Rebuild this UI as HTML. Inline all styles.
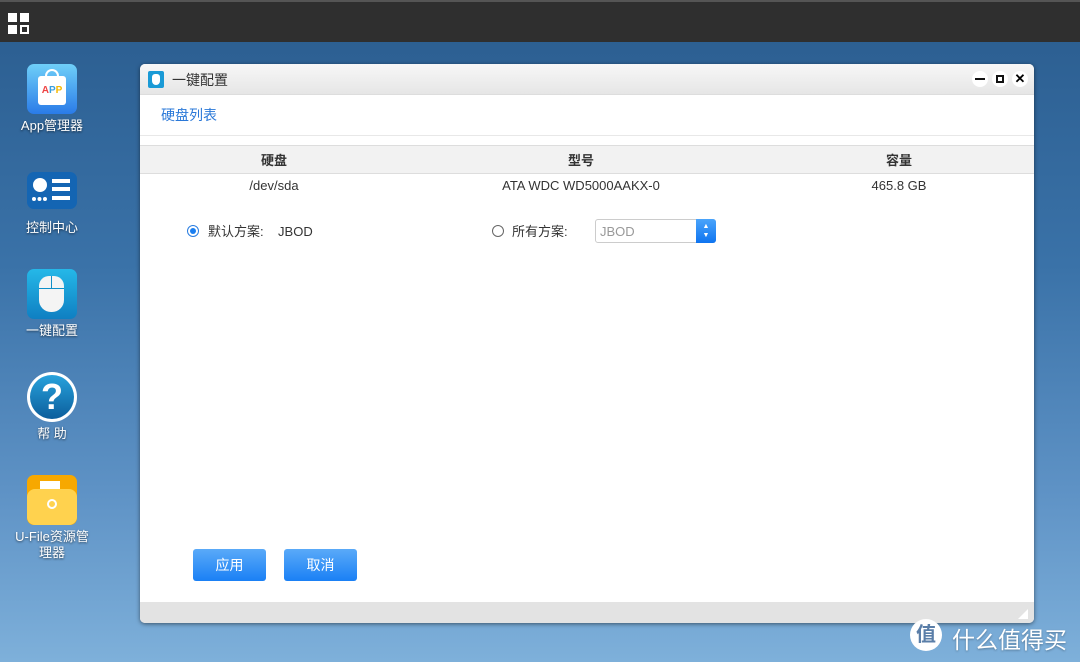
<!DOCTYPE html>
<html><head><meta charset="utf-8"><style>
*{margin:0;padding:0;box-sizing:border-box}
body{width:1080px;height:662px;overflow:hidden;position:relative;font-family:"Liberation Sans","Noto Sans CJK SC",sans-serif;background:linear-gradient(180deg,#2a5c8e 0%,#3a72a8 40%,#5f93c6 75%,#7eb0da 100%)}
.top{position:absolute;left:0;top:0;width:1080px;height:42px;background:#2f2f2f;border-top:2px solid #555}
.grid{position:absolute;left:8px;top:11px}
.grid i{position:absolute;width:9px;height:9px;background:#fff}
.ic{position:absolute;left:27px;width:50px;height:50px;border-radius:7px}
.lb{position:absolute;left:0;width:104px;text-align:center;color:#fff;font-size:13px;text-shadow:0 1px 2px rgba(0,0,0,.6);line-height:16px}
.win{position:absolute;left:140px;top:64px;width:894px;height:559px;background:#fff;border-radius:5px;box-shadow:0 1px 4px rgba(0,0,0,.5);overflow:hidden}
.tb{height:31px;background:linear-gradient(#f7f7f7,#e6e6e6);border-bottom:1px solid #ddd;position:relative}
.tb .t{position:absolute;left:32px;top:6px;font-size:14px;color:#333}
.th{position:absolute;top:81px;left:0;width:894px;height:29px;background:#f2f2f2;border-top:1px solid #ddd;border-bottom:1px solid #ddd;font-size:13px;font-weight:bold;color:#333}
.c{position:absolute;text-align:center;width:300px}
.btn{position:absolute;top:485px;width:73px;height:32px;border-radius:3px;background:linear-gradient(#5aaaf8,#1a80f5);color:#fff;font-size:14px;text-align:center;line-height:32px}
.foot{position:absolute;left:0;top:538px;width:894px;height:21px;background:#e3e3e3}
</style></head><body>
<div class="top"><div class="grid"><i style="left:0;top:0"></i><i style="left:12px;top:0"></i><i style="left:0;top:12px"></i><i style="left:12px;top:12px;background:none;border:2px solid #fff"></i></div></div>

<div class="ic" style="top:64px;background:linear-gradient(#6fcff8,#2a7be8)"><div style="position:absolute;left:11px;top:12px;width:28px;height:29px;background:#fff;border-radius:3px;font-size:10px;font-weight:bold;text-align:center;line-height:30px;color:#e44">A<span style="color:#3aa0e0">P</span><span style="color:#f5b800">P</span></div><div style="position:absolute;left:18px;top:5px;width:14px;height:12px;border:2px solid #fff;border-bottom:none;border-radius:7px 7px 0 0"></div></div>
<div class="lb" style="top:118px">App管理器</div>

<div class="ic" style="top:172px;height:37px;background:#1465b3"><div style="position:absolute;left:6px;top:6px;width:14px;height:14px;border-radius:50%;background:#fff"></div><div style="position:absolute;left:25px;top:7px;width:18px;height:4px;background:#fff"></div><div style="position:absolute;left:25px;top:15px;width:18px;height:4px;background:#fff"></div><div style="position:absolute;left:25px;top:24px;width:18px;height:4px;background:#fff"></div><div style="position:absolute;left:5px;top:25px;width:15px;height:4px;border-top:4px dotted #fff"></div></div>
<div class="lb" style="top:220px">控制中心</div>

<div class="ic" style="top:269px;background:linear-gradient(#25b8e8,#0f7fc2)"><div style="position:absolute;left:12px;top:7px;width:25px;height:36px;background:#f4f4f4;border-radius:10px 10px 12px 12px"></div><div style="position:absolute;left:24px;top:7px;width:1px;height:12px;background:#0f8fc8"></div><div style="position:absolute;left:12px;top:19px;width:25px;height:1px;background:#0f8fc8"></div></div>
<div class="lb" style="top:323px">一键配置</div>

<div class="ic" style="top:372px;border-radius:50%;background:#fff;"><div style="position:absolute;left:3px;top:3px;width:44px;height:44px;border-radius:50%;background:linear-gradient(#27a2dc,#0c5e9c);color:#fff;font-weight:bold;font-size:36px;text-align:center;line-height:44px">?</div></div>
<div class="lb" style="top:426px">帮 助</div>

<div class="ic" style="top:475px;background:#f7a800"><div style="position:absolute;left:0;top:14px;width:50px;height:36px;background:#ffd24e;border-radius:8px"></div><div style="position:absolute;left:13px;top:6px;width:20px;height:8px;background:#fff"></div><div style="position:absolute;left:20px;top:24px;width:10px;height:10px;border:2px solid #fff;border-radius:50%"></div></div>
<div class="lb" style="top:529px">U-File资源管<br>理器</div>

<div class="win">
 <div class="tb"><div style="position:absolute;left:8px;top:7px;width:16px;height:17px;background:#1a9ad6;border-radius:2px"><div style="position:absolute;left:4px;top:3px;width:8px;height:11px;background:#fff;border-radius:3px 3px 4px 4px"></div></div><div class="t">一键配置</div>
 <div style="position:absolute;right:46px;top:7px;width:16px;height:16px;border-radius:50%;background:#fff"><div style="margin:7px 3px;height:2px;background:#111"></div></div>
 <div style="position:absolute;right:26px;top:7px;width:16px;height:16px;border-radius:50%;background:#fff"><div style="margin:4px;height:8px;border:2px solid #111"></div></div>
 <div style="position:absolute;right:6px;top:7px;width:16px;height:16px;border-radius:50%;background:#fff;font-size:13px;font-weight:bold;text-align:center;line-height:16px">✕</div></div>
 <div style="position:absolute;left:21px;top:41px;font-size:14px;color:#2a78d8">硬盘列表</div>
 <div style="position:absolute;left:0;top:71px;width:894px;height:1px;background:#e8e8e8"></div>
 <div class="th"><div class="c" style="left:-16px;top:4px">硬盘</div><div class="c" style="left:291px;top:4px">型号</div><div class="c" style="left:609px;top:4px">容量</div></div>
 <div style="position:absolute;top:114px;width:894px;font-size:13px;color:#333"><div class="c" style="left:-16px">/dev/sda</div><div class="c" style="left:291px">ATA WDC WD5000AAKX-0</div><div class="c" style="left:609px">465.8 GB</div></div>
 <div style="position:absolute;left:47px;top:161px;width:12px;height:12px;border:1px solid #2a7de0;border-radius:50%"><div style="margin:2px;width:6px;height:6px;border-radius:50%;background:#1a7ef0"></div></div>
 <div style="position:absolute;left:68px;top:157px;font-size:13px;color:#333">默认方案:&nbsp;&nbsp;&nbsp;&nbsp;JBOD</div>
 <div style="position:absolute;left:352px;top:161px;width:12px;height:12px;border:1px solid #666;border-radius:50%"></div>
 <div style="position:absolute;left:372px;top:157px;font-size:13px;color:#333">所有方案:</div>
 <div style="position:absolute;left:455px;top:155px;width:121px;height:24px;border:1px solid #ccc;border-radius:3px;font-size:13px;color:#999;line-height:24px;padding-left:4px">JBOD<div style="position:absolute;right:-1px;top:-1px;width:20px;height:24px;background:linear-gradient(#4aa4fb,#0e74f0);border-radius:0 3px 3px 0;color:#fff;font-size:7px;text-align:center;line-height:9px;padding-top:3px">▲<br>▼</div></div>
 <div class="btn" style="left:53px">应用</div><div class="btn" style="left:144px">取消</div>
 <div class="foot"><div style="position:absolute;right:6px;bottom:4px;width:0;height:0;border-left:10px solid transparent;border-bottom:10px solid #fff"></div></div>
</div>

<div style="position:absolute;left:910px;top:619px;width:32px;height:32px;border-radius:50%;background:#fff;color:#5a7ea8;font-size:20px;text-align:center;line-height:32px;font-weight:bold">值</div>
<div style="position:absolute;left:952px;top:621px;color:#fff;font-size:23px;text-shadow:0 1px 2px rgba(0,0,0,.3)">什么值得买</div>
</body></html>
